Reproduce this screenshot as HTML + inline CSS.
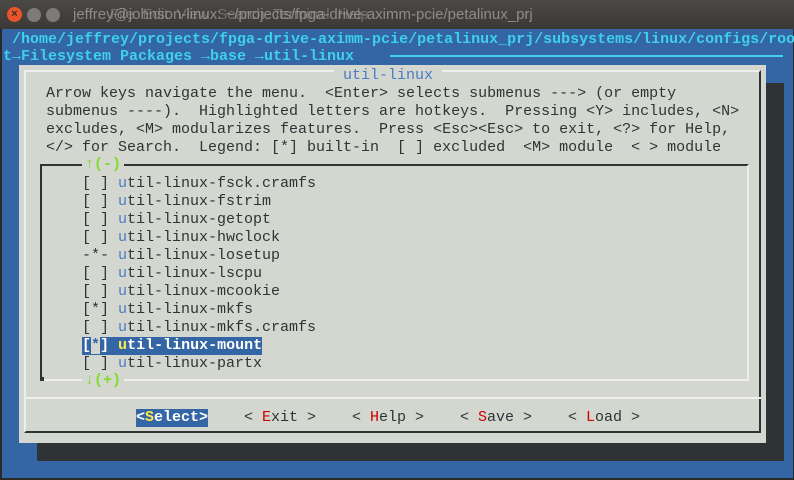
<!DOCTYPE html>
<html><head><meta charset="utf-8"><style>
*{margin:0;padding:0;box-sizing:border-box}
body{width:794px;height:480px;overflow:hidden;background:#3465a4;position:relative;font-family:"Liberation Mono",monospace;font-size:15px;}
.t{position:absolute;white-space:pre;line-height:18px;height:18px}
.tb{position:absolute;left:0;top:0;width:794px;height:29px;background:linear-gradient(#4a4945,#3a3935);}
.c{color:#3fd0ea;font-weight:bold}
.d{color:#2e3436}
.h{color:#4a7cc4}
.r{color:#cc0000}
.g{color:#7fdc2a;font-weight:bold}
</style></head><body>
<div class="tb"></div>
<div style="position:absolute;left:7px;top:7px;width:15px;height:15px;border-radius:50%;background:#e9552a;color:#3a2a20;font:bold 11px 'Liberation Sans',sans-serif;text-align:center;line-height:15px">×</div>
<div style="position:absolute;left:27px;top:8px;width:14px;height:14px;border-radius:50%;background:#7c7b77"></div>
<div style="position:absolute;left:46px;top:8px;width:14px;height:14px;border-radius:50%;background:#7c7b77"></div>
<div class="t" style="left:73px;top:6px;font-family:'Liberation Sans',sans-serif;font-size:15px;color:#a09f9a;opacity:.8">jeffrey@johnson-linux: ~/projects/fpga-drive-aximm-pcie/petalinux_prj</div>
<div class="t" style="left:110px;top:6px;font-family:'Liberation Sans',sans-serif;font-size:15px;color:#a09f9a;opacity:.5">File  Edit  View  Search  Terminal  Help</div>
<div style="position:absolute;left:0;top:29px;width:794px;height:451px;border:2px solid #2a2a28;border-top:none;border-right-width:1px"></div>

<div class="t c" style="left:3px;top:31px"> /home/jeffrey/projects/fpga-drive-aximm-pcie/petalinux_prj/subsystems/linux/configs/roo</div>
<div class="t c" style="left:3px;top:48px">t→Filesystem Packages →base →util-linux</div>
<div style="position:absolute;left:390px;top:55px;width:393px;height:2px;background:#3fd0ea"></div>

<div style="position:absolute;left:37px;top:83px;width:747px;height:378px;background:#2e3436"></div>
<div style="position:absolute;left:19px;top:65px;width:747px;height:378px;background:#d3d7cf"></div>
<div style="position:absolute;left:24px;top:70px;width:737px;height:363px;border:2px solid #eeeeec;border-right-color:#2e3436;border-bottom-color:#2e3436"></div>
<div class="t h" style="left:334px;top:67px;background:#d3d7cf;padding:0 9px">util-linux</div>

<div class="t d" style="left:46px;top:85px">Arrow keys navigate the menu.  &lt;Enter&gt; selects submenus ---&gt; (or empty</div>
<div class="t d" style="left:46px;top:103px">submenus ----).  Highlighted letters are hotkeys.  Pressing &lt;Y&gt; includes, &lt;N&gt;</div>
<div class="t d" style="left:46px;top:121px">excludes, &lt;M&gt; modularizes features.  Press &lt;Esc&gt;&lt;Esc&gt; to exit, &lt;?&gt; for Help,</div>
<div class="t d" style="left:46px;top:139px">&lt;/&gt; for Search.  Legend: [*] built-in  [ ] excluded  &lt;M&gt; module  &lt; &gt; module</div>

<div style="position:absolute;left:40px;top:164px;width:709px;height:217px;border:2px solid #2e3436;border-right-color:#eeeeec;border-bottom-color:#eeeeec"></div>
<div style="position:absolute;left:40px;top:377px;width:4px;height:4px;background:#2e3436"></div>
<div class="t g" style="left:82px;top:156px;background:#d3d7cf;padding:0 3px">↑(-)</div>
<div class="t g" style="left:82px;top:372px;background:#d3d7cf;padding:0 3px">↓(+)</div>

<div class="t d" style="left:82px;top:175px">[ ] <span class="h">u</span>til-linux-fsck.cramfs</div>
<div class="t d" style="left:82px;top:193px">[ ] <span class="h">u</span>til-linux-fstrim</div>
<div class="t d" style="left:82px;top:211px">[ ] <span class="h">u</span>til-linux-getopt</div>
<div class="t d" style="left:82px;top:229px">[ ] <span class="h">u</span>til-linux-hwclock</div>
<div class="t d" style="left:82px;top:247px">-*- <span class="h">u</span>til-linux-losetup</div>
<div class="t d" style="left:82px;top:265px">[ ] <span class="h">u</span>til-linux-lscpu</div>
<div class="t d" style="left:82px;top:283px">[ ] <span class="h">u</span>til-linux-mcookie</div>
<div class="t d" style="left:82px;top:301px">[*] <span class="h">u</span>til-linux-mkfs</div>
<div class="t d" style="left:82px;top:319px">[ ] <span class="h">u</span>til-linux-mkfs.cramfs</div>
<div class="t" style="left:82px;top:337px;background:#3465a4;color:#fff;font-weight:bold">[<span style="background:#d3d7cf;color:#3465a4">*</span>] <span style="color:#fce94f">u</span>til-linux-mount</div>
<div class="t d" style="left:82px;top:355px">[ ] <span class="h">u</span>til-linux-partx</div>

<div style="position:absolute;left:24px;top:397px;width:737px;height:2px;background:#eeeeec"></div>

<div class="t" style="left:136px;top:409px;background:#3465a4;color:#fff;font-weight:bold">&lt;<span style="color:#fce94f">S</span>elect&gt;</div>
<div class="t d" style="left:244px;top:409px">&lt; <span class="r">E</span>xit &gt;</div>
<div class="t d" style="left:352px;top:409px">&lt; <span class="r">H</span>elp &gt;</div>
<div class="t d" style="left:460px;top:409px">&lt; <span class="r">S</span>ave &gt;</div>
<div class="t d" style="left:568px;top:409px">&lt; <span class="r">L</span>oad &gt;</div>
</body></html>
